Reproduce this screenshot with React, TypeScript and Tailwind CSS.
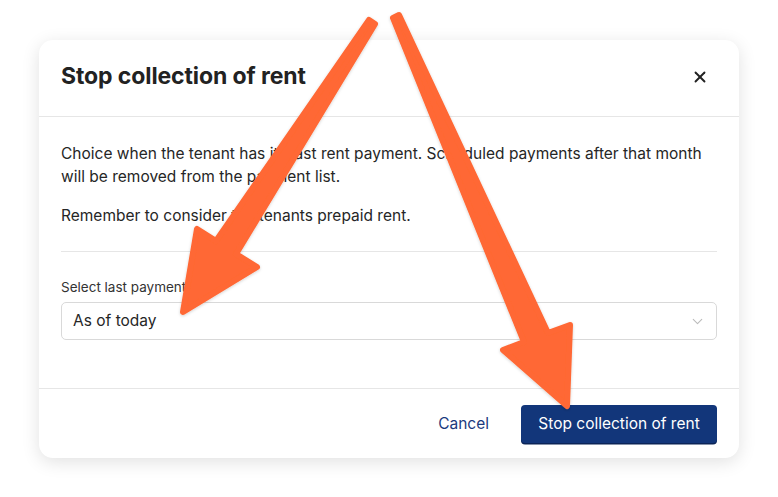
import { ChevronDown, X } from "lucide-react";

const Arrows = () => (
  <svg
    className="pointer-events-none absolute inset-0"
    width="778"
    height="497"
    viewBox="0 0 778 497"
  >
    <defs>
      <filter id="arrowShadow" x="-20%" y="-20%" width="140%" height="140%">
        <feDropShadow dx="0" dy="1" stdDeviation="1.5" floodColor="#000" floodOpacity="0.18" />
      </filter>
    </defs>
    <g fill="#ff6834" stroke="#ff6834" strokeWidth="6" strokeLinejoin="round" filter="url(#arrowShadow)">
      <polygon points="369,20 216,241 197,229 183,312 257,267 236,254 375,24" />
      <polygon points="393,18 524,342 503,350 567,406 570,325 548,333 399,15" />
    </g>
  </svg>
);

export default function App() {
  return (
    <div
      className="relative h-[497px] w-[778px] overflow-hidden bg-white text-[#262626]"
      style={{ fontFamily: "Inter, 'Liberation Sans', sans-serif" }}
    >
      <div className="pt-[40px] pl-[39px]">
        <div className="flex w-[700px] flex-col rounded-[14px] bg-white shadow-[0_4px_18px_rgba(0,0,0,0.12)]">
          <div className="flex h-[77px] items-center justify-between border-b border-[#e6e6e6] pl-[22px] pr-[30px]">
            <h2 className="-mt-[3px] text-[23px] font-bold tracking-[-0.1px] text-[#222]">Stop collection of rent</h2>
            <X size={18} strokeWidth={2.5} className="-mt-[3px] text-[#222]" />
          </div>

          <div className="px-[22px] pt-[25px]">
            <p className="text-[15.5px] leading-[23px]">
              Choice when the tenant has its last rent payment. Scheduled payments after that month will be
              removed from the payment list.
            </p>
            <p className="mt-[16px] text-[15.5px] leading-[23px]">Remember to consider the tenants prepaid rent.</p>
            <div className="mt-[24px] border-t border-[#e6e6e6]" />
            <label className="mt-[26px] block text-[13.5px] leading-[18px] text-[#333]">
              Select last payment step
            </label>
            <div className="mt-[6px] flex h-[38px] items-center justify-between rounded-[5px] border border-[#d9d9d9] pl-[11px] pr-[10px]">
              <span className="text-[15.5px]">As of today</span>
              <ChevronDown size={17} strokeWidth={1.5} className="text-[#bbb]" />
            </div>
          </div>

          <div className="mt-[48px] flex h-[70px] items-center justify-end gap-[32px] border-t border-[#e6e6e6] px-[22px]">
            <button className="text-[15.5px] text-[#1b3a7e]">Cancel</button>
            <button className="h-[38px] w-[196px] rounded-[4px] bg-[#12367a] text-[15.5px] text-white shadow-[0_1.5px_0_#0b2457]">
              Stop collection of rent
            </button>
          </div>
        </div>
      </div>
      <Arrows />
    </div>
  );
}
